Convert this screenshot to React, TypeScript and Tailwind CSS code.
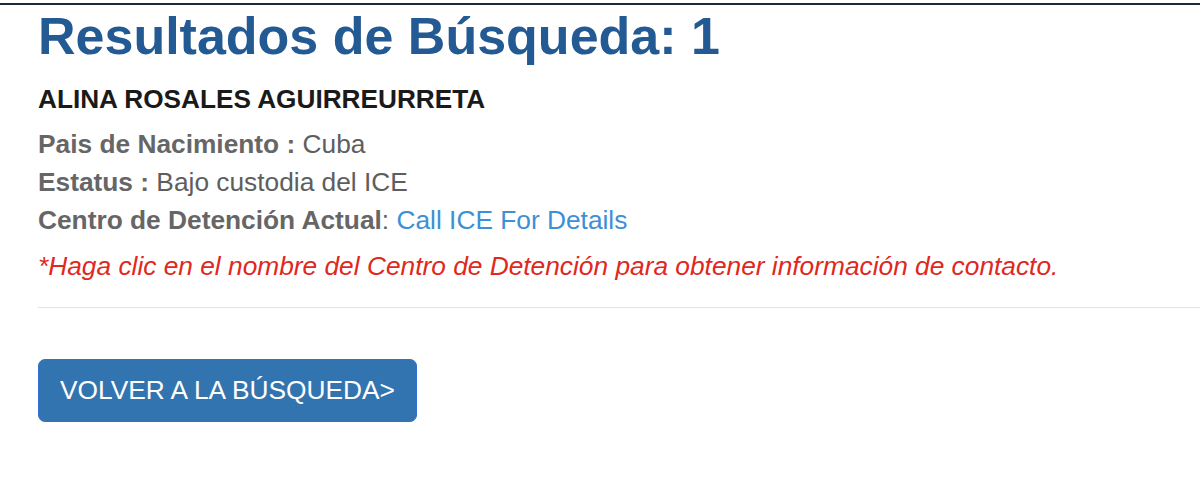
import React from "react";

export default function App() {
  return (
    <div className="w-[1200px] h-[498px] bg-white overflow-hidden" style={{ fontFamily: '"Liberation Sans", Arial, sans-serif' }}>
      <div className="h-[3px]" />
      <div className="h-[2px] bg-[#1c2a3a]" />
      <div className="pl-[38px]">
        <h1 className="text-[52px] leading-[58px] font-bold text-[#235a93] mt-[2px]">Resultados de Búsqueda: 1</h1>
        <div className="text-[26.2px] leading-[30px] font-bold text-[#1a1a1a] mt-[19px]">ALINA ROSALES AGUIRREURRETA</div>
        <div className="text-[26.3px] leading-[38px] text-[#5e5e5e] mt-[11px]">
          <div><span className="font-bold text-[#666666]">Pais de Nacimiento :</span> Cuba</div>
          <div><span className="font-bold text-[#666666]">Estatus :</span> Bajo custodia del ICE</div>
          <div><span className="font-bold text-[#666666]">Centro de Detención Actual</span>: <span className="text-[#3d8fd6]">Call ICE For Details</span></div>
          <div className="italic text-[#e0281d] mt-[8px]">*Haga clic en el nombre del Centro de Detención para obtener información de contacto.</div>
        </div>
        <div className="h-px bg-[#e3e3e3] mt-[22px]" />
        <button className="mt-[51px] h-[63px] px-[21px] rounded-[7px] bg-[#3274b0] border border-[#2f6fd6] text-white text-[26.3px] leading-none flex items-center">VOLVER A LA BÚSQUEDA&gt;</button>
      </div>
    </div>
  );
}
